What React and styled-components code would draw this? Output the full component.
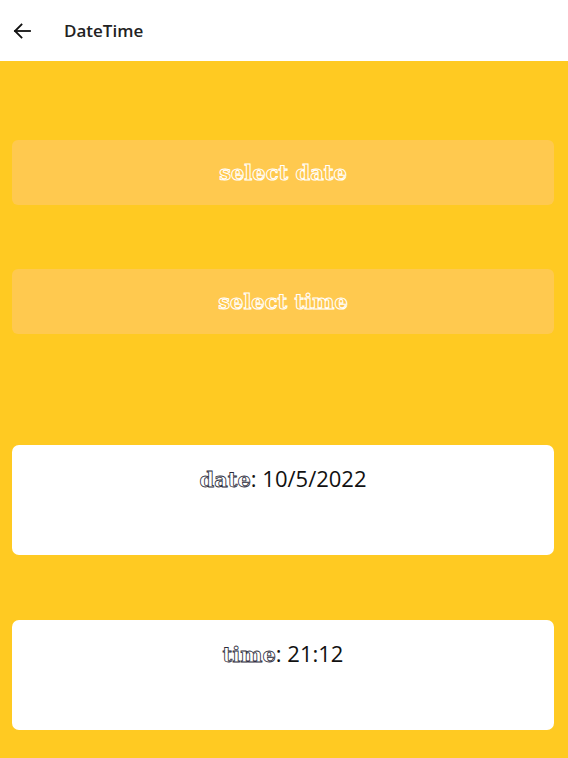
import React, { useState } from 'react'
import styled, { createGlobalStyle } from 'styled-components'

const GlobalStyle = createGlobalStyle`
  body {
    margin: 0;
    font-family: "Open Sans", "Noto Sans", sans-serif;
    background: #ffca22;
  }
`

const Page = styled.div`
  min-height: 758px;
  background: #ffca22;
  display: flex;
  flex-direction: column;
`

const Header = styled.header`
  height: 61px;
  background: #fff;
  display: flex;
  align-items: center;
  padding-left: 12px;
  gap: 32px;
  box-sizing: border-box;
`

const BackButton = styled.button`
  border: none;
  background: none;
  padding: 0;
  width: 20px;
  height: 20px;
  display: flex;
  align-items: center;
  justify-content: center;
  color: #111;
  cursor: pointer;
`

const Title = styled.h1`
  margin: 0;
  font-size: 17px;
  font-weight: 600;
  color: #222;
`

const Content = styled.main`
  display: flex;
  flex-direction: column;
  padding: 79px 14px 0 12px;
`

const SelectButton = styled.button`
  height: 65px;
  border: none;
  border-radius: 6px;
  background: #ffc94f;
  margin-bottom: ${(p) => p.$gap}px;
  font-family: "DejaVu Serif", "Liberation Serif", serif;
  font-size: 21px;
  font-weight: bold;
  color: #ffc94f;
  -webkit-text-stroke: 1px #fff;
  cursor: pointer;
`

const Card = styled.section`
  height: 110px;
  background: #fff;
  border-radius: 7px;
  margin-bottom: ${(p) => p.$gap}px;
  text-align: center;
  padding-top: 18px;
  box-sizing: border-box;
  font-size: 22px;
  line-height: 30px;
  color: #111;
`

const Label = styled.span`
  font-family: "DejaVu Serif", "Liberation Serif", serif;
  font-size: 21px;
  font-weight: bold;
  color: #fff;
  -webkit-text-stroke: 0.8px #2a2a3a;
`

const Value = styled.span`
  font-family: "Open Sans", "Noto Sans", sans-serif;
  font-weight: 400;
`

function ArrowLeft() {
  return (
    <svg width="20" height="20" viewBox="0 0 20 20" fill="none" stroke="currentColor" strokeWidth="1.8" strokeLinecap="square">
      <path d="M18 10H3" />
      <path d="M9.5 3.5L3 10l6.5 6.5" />
    </svg>
  )
}

export default function App() {
  const [date] = useState('10/5/2022')
  const [time] = useState('21:12')

  return (
    <>
      <GlobalStyle />
      <Page>
        <Header>
          <BackButton aria-label="back">
            <ArrowLeft />
          </BackButton>
          <Title>DateTime</Title>
        </Header>
        <Content>
          <SelectButton $gap={64}>select date</SelectButton>
          <SelectButton $gap={111}>select time</SelectButton>
          <Card $gap={65}>
            <Label>date</Label>
            <Value>: {date}</Value>
          </Card>
          <Card $gap={0}>
            <Label>time</Label>
            <Value>: {time}</Value>
          </Card>
        </Content>
      </Page>
    </>
  )
}
